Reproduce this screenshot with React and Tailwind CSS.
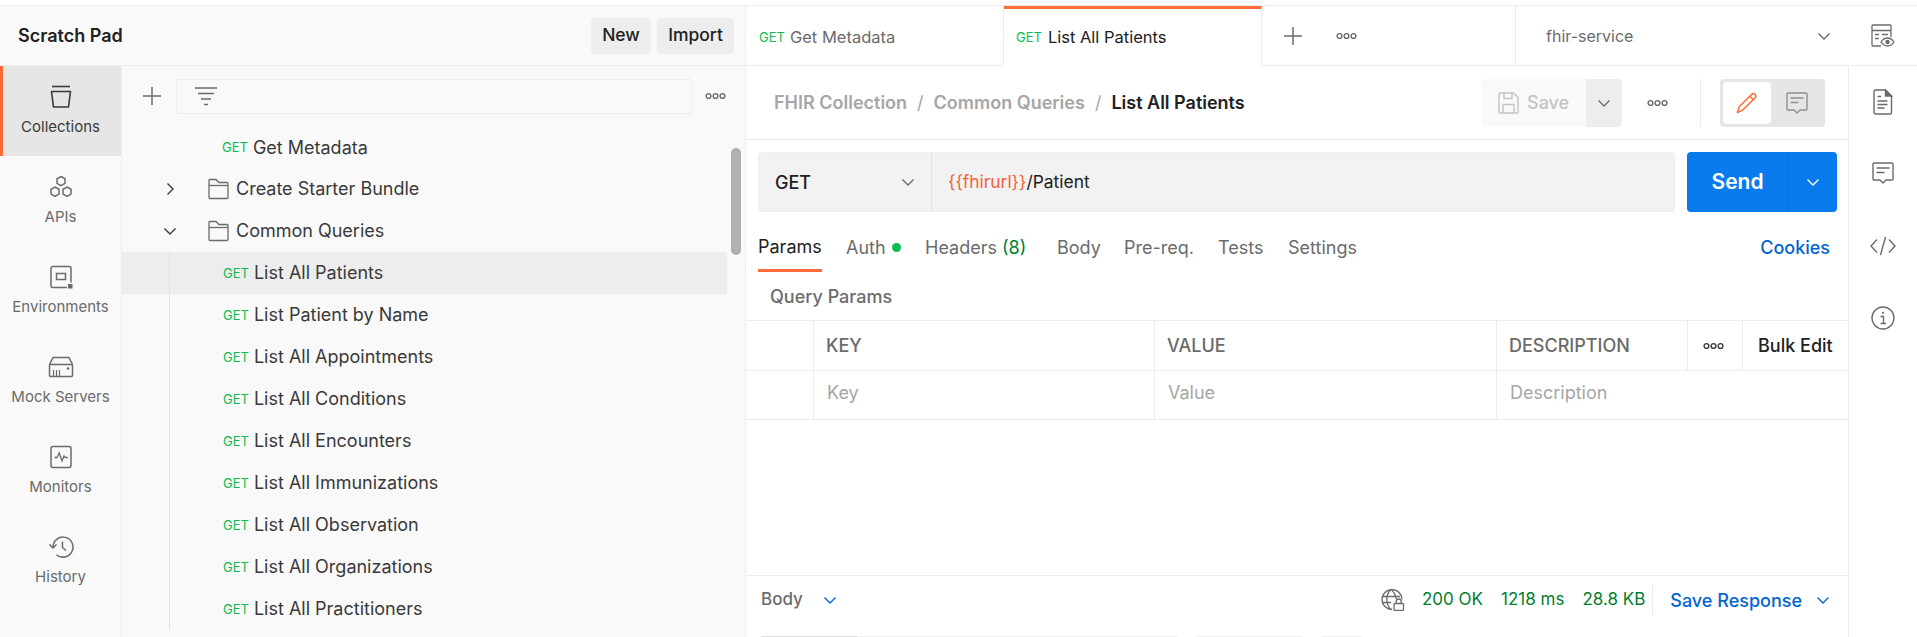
import React from 'react';

const Dots = ({ className = 'text-[#6b6b6b]' }) => (
  <svg width="21" height="8" viewBox="0 0 21 8" fill="none" stroke="currentColor" strokeWidth="1.4" className={className}>
    <circle cx="3.5" cy="4" r="2.4" />
    <circle cx="10.5" cy="4" r="2.4" />
    <circle cx="17.5" cy="4" r="2.4" />
  </svg>
);

const Chevron = ({ dir = 'down', size = 14, className = 'text-[#6b6b6b]' }) => (
  <svg width={size} height={size} viewBox="0 0 14 14" fill="none" stroke="currentColor" strokeWidth="1.4" className={className}>
    {dir === 'down' ? <path d="M1.5 4.5 7 10l5.5-5.5" /> : <path d="M4.5 1.5 10 7l-5.5 5.5" />}
  </svg>
);

const Plus = ({ size = 20, className = 'text-[#6b6b6b]' }) => (
  <svg width={size} height={size} viewBox="0 0 20 20" fill="none" stroke="currentColor" strokeWidth="1.5" className={className}>
    <path d="M10 1v18M1 10h18" />
  </svg>
);

const Folder = () => (
  <svg width="21" height="22" viewBox="0 0 21 22" fill="none" stroke="#6b6b6b" strokeWidth="1.3">
    <path d="M1 2.5A1 1 0 0 1 2 1.5h6l3 3h8a1 1 0 0 1 1 1v14a1 1 0 0 1-1 1H2a1 1 0 0 1-1-1z" />
    <path d="M1 7.5h19" />
  </svg>
);

const CollectionsIcon = () => (
  <svg width="24" height="24" viewBox="0 0 24 24" fill="none" stroke="#3a3a3a" strokeWidth="1.6">
    <path d="M3 1.5h18" />
    <path d="M2.5 6.5h19l-2 15.5h-15z" strokeLinejoin="round" />
  </svg>
);

const ApisIcon = () => (
  <svg width="24" height="24" viewBox="0 0 24 24" fill="none" stroke="#6b6b6b" strokeWidth="1.5">
    <path d="m12 1.5 4 2.3v4.6l-4 2.3-4-2.3V3.8z" />
    <path d="m6 12 4 2.3v4.8L6 21.5l-4-2.4v-4.8z" />
    <path d="m18 12 4 2.3v4.8l-4 2.4-4-2.4v-4.8z" />
  </svg>
);

const EnvIcon = () => (
  <svg width="24" height="24" viewBox="0 0 24 24" fill="none" stroke="#6b6b6b" strokeWidth="1.5">
    <path d="M18 22.5H4a2 2 0 0 1-2-2v-17a2 2 0 0 1 2-2h16a2 2 0 0 1 2 2v14" />
    <rect x="7.5" y="8.5" width="9" height="6" />
    <rect x="19" y="19" width="4.5" height="4.5" fill="#6b6b6b" stroke="none" />
  </svg>
);

const MockIcon = () => (
  <svg width="26" height="24" viewBox="0 0 26 24" fill="none" stroke="#6b6b6b" strokeWidth="1.5">
    <path d="M1.5 9.5 5 2.5h16l3.500 7" />
    <rect x="1.500" y="9.500" width="23" height="12" rx="1" />
    <path d="M5.500 15v6M8.500 15v6M11.500 15v6" strokeWidth="1.2" />
    <circle cx="20" cy="13.500" r="1.300" fill="#6b6b6b" stroke="none" />
  </svg>
);

const MonitorIcon = () => (
  <svg width="24" height="24" viewBox="0 0 24 24" fill="none" stroke="#6b6b6b" strokeWidth="1.5">
    <rect x="2" y="1.500" width="20" height="21" rx="2" />
    <path d="M5.500 12.500h2.500l2.200-4.500 2.800 8 2-5 1.300 1.500h2.500" strokeWidth="1.300" />
  </svg>
);

const HistoryIcon = () => (
  <svg width="26" height="24" viewBox="0 0 26 24" fill="none" stroke="#6b6b6b" strokeWidth="1.5">
    <path d="M5 12a10 10 0 1 1 3.500 7.700" />
    <path d="m1.500 9.500 3.500 3.500 3.500-3.500" />
    <path d="M14.500 6.500v6l3.500 3" />
  </svg>
);

const FilterIcon = () => (
  <svg width="22" height="20" viewBox="0 0 22 20" fill="none" stroke="#6b6b6b" strokeWidth="1.5">
    <path d="M0 2h22M3 7.500h16M6 13h10M9 18.500h4" />
  </svg>
);

const EyeDocIcon = () => (
  <svg width="24" height="24" viewBox="0 0 24 24" fill="none" stroke="#6b6b6b" strokeWidth="1.300">
    <path d="M10 22H2a1 1 0 0 1-1-1V2a1 1 0 0 1 1-1h17a1 1 0 0 1 1 1v11" />
    <path d="M1 6.500h19M4 10.500h4M11 10.500h6M4 14.500h4" />
    <path d="M10 18c2-3 4-4 6.500-4s4.500 1 6.500 4c-2 3-4 4-6.500 4s-4.500-1-6.500-4z" fill="#fff" />
    <circle cx="16.500" cy="18" r="2.200" fill="#6b6b6b" stroke="none" />
  </svg>
);

const DocIcon = () => (
  <svg width="20" height="26" viewBox="0 0 20 26" fill="none" stroke="#6b6b6b" strokeWidth="1.400">
    <path d="M2.500 1h10L18.500 7v16.500a1.500 1.500 0 0 1-1.500 1.500H2.500A1.500 1.500 0 0 1 1 23.500v-21A1.500 1.500 0 0 1 2.500 1z" />
    <path d="M12.500 1v6h6z" fill="#6b6b6b" />
    <path d="M4.500 7.500h3.500M4.500 12h10M4.500 15.500h10M4.500 19h7" />
  </svg>
);

const CommentIcon = ({ stroke = '#6b6b6b' }) => (
  <svg width="22" height="22" viewBox="0 0 22 22" fill="none" stroke={stroke} strokeWidth="1.400">
    <path d="M2 1h18a1 1 0 0 1 1 1v15a1 1 0 0 1-1 1h-6l-3 3-3-3H2a1 1 0 0 1-1-1V2a1 1 0 0 1 1-1z" />
    <path d="M4.500 6h13M4.500 10.500h8" />
  </svg>
);

const CodeIcon = () => (
  <svg width="26" height="20" viewBox="0 0 26 20" fill="none" stroke="#6b6b6b" strokeWidth="1.400">
    <path d="M7 3.500 1 10l6 6.500M19 3.500l6 6.500-6 6.500M15.500 1l-5 18" />
  </svg>
);

const InfoIcon = () => (
  <svg width="24" height="24" viewBox="0 0 24 24" fill="none" stroke="#6b6b6b" strokeWidth="1.400">
    <circle cx="12" cy="12" r="11" />
    <circle cx="12" cy="6.800" r="1.100" fill="#6b6b6b" stroke="none" />
    <path d="M9.500 10.500H12.500V17.500M9.500 17.500H15" />
  </svg>
);

const SaveIcon = () => (
  <svg width="21" height="22" viewBox="0 0 21 22" fill="none" stroke="#c4c4c4" strokeWidth="1.400">
    <path d="M2 1h13.500L20 5.500V20a1 1 0 0 1-1 1H2a1 1 0 0 1-1-1V2a1 1 0 0 1 1-1z" />
    <path d="M6 1v5.500h8V1M5 21v-8.500h11V21" />
  </svg>
);

const PencilIcon = () => (
  <svg width="22" height="22" viewBox="0 0 22 22" fill="none" stroke="#ff6c37" strokeWidth="1.500">
    <path d="M1.500 20.500 3 15 15.500 2.500a2.300 2.300 0 0 1 3.700 3.300L7 17.800z" strokeLinejoin="round" />
    <path d="m14 4.500 3.700 3.500" />
  </svg>
);

const GlobeIcon = () => (
  <svg width="25" height="22" viewBox="0 0 25 22" fill="none" stroke="#6b6b6b" strokeWidth="1.300">
    <path d="M12 20.500a10 10 0 1 1 10-10" />
    <path d="M10.500 1C5.500 6 5.500 15 10.500 20M11.500 1c3 2.500 4.300 5.500 4.700 9M2 7.500h18M2 13.500h9" />
    <rect x="14" y="14.500" width="9.500" height="7" rx="1" fill="#fff" />
    <path d="M16.200 14.500v-2a2.500 2.500 0 0 1 5 0v2" />
  </svg>
);

const RailItem = ({ icon, label, active }) => (
  <div className={`h-[90px] flex flex-col items-center pt-[18px] pr-[3px] border-l-[3px] ${active ? 'bg-[#e6e6e6] border-[#ff6c37] text-[#3a3a3a]' : 'border-transparent text-[#6b6b6b]'}`}>
    <div className="h-[25px] flex items-center">{icon}</div>
    <span className="mt-[8px] text-[15px] leading-[20px] whitespace-nowrap">{label}</span>
  </div>
);

const Get = ({ className = '' }) => (
  <span className={`text-[13px] leading-none text-[#0cbb52] ${className}`}>GET</span>
);

const FolderRow = ({ name, open }) => (
  <div className="h-[42px] flex items-center text-[18px] text-[#3a3a3a]">
    <div className="w-[96px] flex items-center">
      <span className="ml-[41px] w-[14px]"><Chevron dir={open ? 'down' : 'right'} className="text-[#3a3a3a]" /></span>
      <span className="ml-[31px]"><Folder /></span>
    </div>
    <span className="-ml-[4px] pl-[22px] pb-px">{name}</span>
  </div>
);

const requests = [
  'List All Patients',
  'List Patient by Name',
  'List All Appointments',
  'List All Conditions',
  'List All Encounters',
  'List All Immunizations',
  'List All Observation',
  'List All Organizations',
  'List All Practitioners',
];

const HeadCell = ({ width, children }) => (
  <div className={`${width} h-full flex items-center pl-[12px] pb-px border-r border-[#ededed] text-[18px] font-medium text-[#6b6b6b]`}>{children}</div>
);

const KeyCell = ({ width, children }) => (
  <div className={`${width} h-full flex items-center pl-[13px] pb-[5px] border-r border-[#ededed] text-[18px] text-[#a6a6a6]`}>{children}</div>
);

export default function App() {
  return (
    <div className="w-[1917px] h-[637px] overflow-hidden bg-white flex flex-col font-[Inter,sans-serif]">
      <div className="h-[6px] shrink-0 border-b border-[#ededed]" />
      <div className="flex flex-1 min-h-0">
        {/* left panel */}
        <div className="w-[746px] shrink-0 bg-[#f9f9f9] border-r border-[#ededed] flex flex-col">
          <div className="h-[60px] shrink-0 border-b border-[#ededed] flex items-center pl-[18px] pr-[11px]">
            <span className="text-[18px] font-semibold text-[#212121]">Scratch Pad</span>
            <div className="ml-auto flex gap-[6px]">
              <button className="w-[60px] h-[36px] rounded-[4px] bg-[#ededed] text-[17.500px] font-medium text-[#212121]">New</button>
              <button className="w-[77px] h-[36px] rounded-[4px] bg-[#ededed] text-[17.500px] font-medium text-[#212121]">Import</button>
            </div>
          </div>
          <div className="flex flex-1 min-h-0">
            <div className="w-[122px] shrink-0 border-r border-[#ededed]">
              <RailItem icon={<CollectionsIcon />} label="Collections" active />
              <RailItem icon={<ApisIcon />} label="APIs" />
              <RailItem icon={<EnvIcon />} label="Environments" />
              <RailItem icon={<MockIcon />} label="Mock Servers" />
              <RailItem icon={<MonitorIcon />} label="Monitors" />
              <RailItem icon={<HistoryIcon />} label="History" />
            </div>
            <div className="relative flex-1 min-w-0">
              <div className="h-[60px] flex items-center">
                <span className="ml-[20px]"><Plus /></span>
                <div className="ml-[14px] w-[516px] h-[35px] border border-[#ededed] rounded-[2px] flex items-center pl-[18px]">
                  <FilterIcon />
                </div>
                <span className="ml-[13px]"><Dots /></span>
              </div>
              <div className="mr-[18px]">
                <div className="h-[42px] flex items-center pl-[100px] text-[18px] text-[#3a3a3a]">
                  <Get />
                  <span className="ml-[5px]">Get Metadata</span>
                </div>
                <FolderRow name="Create Starter Bundle" />
                <FolderRow name="Common Queries" open />
                {requests.map((name, i) => (
                  <div key={name} className={`h-[42px] pl-[47px] ${i === 0 ? 'bg-[#ededed]' : ''}`}>
                    <div className="h-full border-l border-[#e3e3e3] flex items-center pl-[53px] text-[18px] text-[#3a3a3a]">
                      <Get />
                      <span className="ml-[5px] pb-px">{name}</span>
                    </div>
                  </div>
                ))}
              </div>
              <div className="absolute left-[609px] top-[82px] w-[10px] h-[107px] rounded-full bg-[#b0b0b0]" />
            </div>
          </div>
        </div>

        {/* right side */}
        <div className="flex-1 min-w-0 flex flex-col">
          <div className="h-[60px] shrink-0 border-b border-[#ededed] flex items-stretch">
            <div className="w-[258px] flex items-center pl-[13px] pt-[3px] border-r border-[#ededed] text-[16.500px] text-[#6b6b6b]">
              <Get />
              <span className="ml-[5px]">Get Metadata</span>
            </div>
            <div className="w-[258px] flex items-center pl-[12px] border-r border-[#ededed] border-t-[3px] border-t-[#ff6c37] -mb-px bg-white text-[16.500px] text-[#212121]">
              <Get />
              <span className="ml-[6px]">List All Patients</span>
            </div>
            <div className="w-[254px] flex items-center border-r border-[#ededed]">
              <span className="ml-[21px]"><Plus /></span>
              <span className="ml-[33px]"><Dots /></span>
            </div>
            <div className="w-[333px] flex items-center pl-[30px] border-r-0 text-[16px] text-[#6b6b6b]">
              <span>fhir-service</span>
              <span className="ml-auto mr-[18px]"><Chevron /></span>
            </div>
            <div className="flex-1 flex items-center justify-center"><EyeDocIcon /></div>
          </div>

          <div className="flex flex-1 min-h-0">
            <div className="w-[1103px] shrink-0 border-r border-[#ededed] flex flex-col">
              {/* breadcrumb */}
              <div className="h-[74px] shrink-0 border-b border-[#ededed] flex items-center pl-[28px] text-[18px] font-semibold">
                <span className="text-[#a6a6a6]">FHIR Collection</span>
                <span className="mx-[10px] font-normal text-[#a6a6a6]">/</span>
                <span className="text-[#a6a6a6]">Common Queries</span>
                <span className="mx-[10px] font-normal text-[#a6a6a6]">/</span>
                <span className="text-[#212121]">List All Patients</span>
                <div className="ml-auto h-[48px] flex items-center">
                  <div className="w-[104px] h-full rounded-l-[4px] bg-[#f9f9f9] flex items-center pl-[16px] text-[#c4c4c4] font-medium">
                    <SaveIcon />
                    <span className="ml-[8px]">Save</span>
                  </div>
                  <div className="w-[36px] h-full rounded-r-[4px] bg-[#ededed] flex items-center justify-center"><Chevron /></div>
                  <span className="ml-[25px]"><Dots /></span>
                  <div className="ml-[32px] w-px h-full bg-[#ededed]" />
                  <div className="ml-[19px] mr-[23px] w-[105px] h-full rounded-[4px] bg-[#e6e6e6] p-[3px] flex items-stretch">
                    <div className="w-[48px] rounded-[4px] bg-white flex items-center justify-center"><PencilIcon /></div>
                    <div className="flex-1 flex items-center justify-center"><CommentIcon stroke="#8f8f8f" /></div>
                  </div>
                </div>
              </div>

              {/* url bar */}
              <div className="pt-[12px] pl-[12px] shrink-0 flex">
                <div className="w-[917px] h-[60px] rounded-[4px] border border-[#ededed] bg-[#f2f2f2] flex text-[18px]">
                  <div className="w-[173px] border-r border-[#e3e3e3] flex items-center pl-[16px] pr-[16px] font-medium text-[#212121]">
                    GET
                    <span className="ml-auto"><Chevron /></span>
                  </div>
                  <div className="flex items-center pl-[16px] text-[17.400px] text-[#212121]">
                    <span className="text-[#f4623a]">{'{{fhirurl}}'}</span>/Patient
                  </div>
                </div>
                <div className="ml-[12px] w-[150px] h-[60px] rounded-[4px] bg-[#097bed] flex text-white">
                  <div className="w-[102px] border-r border-[#0a6fd6] flex items-center justify-center text-[21px] font-semibold">Send</div>
                  <div className="flex-1 flex items-center justify-center"><Chevron className="text-white" /></div>
                </div>
              </div>

              {/* request tabs */}
              <div className="h-[60px] shrink-0 pl-[12px] pr-[18px] flex items-stretch text-[18px] text-[#6b6b6b]">
                <div className="w-[88px]">
                  <span className="inline-flex items-center h-full pt-[12px] border-b-[3px] border-[#ff6c37] text-[#212121]">Params</span>
                </div>
                <div className="w-[79px] pt-[11px] flex items-center gap-[6px]">
                  Auth
                  <span className="w-[9px] h-[9px] rounded-full bg-[#0cbb52]" />
                </div>
                <div className="w-[132px] pt-[11px] flex items-center">
                  Headers&nbsp;<span className="text-[#007f31]">(8)</span>
                </div>
                <div className="w-[67px] pt-[11px] flex items-center">Body</div>
                <div className="w-[94px] pt-[11px] flex items-center">Pre-req.</div>
                <div className="w-[70px] pt-[11px] flex items-center">Tests</div>
                <div className="pt-[11px] flex items-center">Settings</div>
                <div className="ml-auto pt-[11px] flex items-center font-medium text-[#0265d2]">Cookies</div>
              </div>

              <div className="h-[48px] shrink-0 pl-[24px] flex items-center text-[18px] font-medium text-[#6b6b6b]">Query Params</div>

              {/* params table */}
              <div className="h-[51px] shrink-0 border-y border-[#ededed] flex">
                <HeadCell width="w-[68px]" />
                <HeadCell width="w-[341px]">KEY</HeadCell>
                <HeadCell width="w-[342px]">VALUE</HeadCell>
                <HeadCell width="w-[191px]">DESCRIPTION</HeadCell>
                <div className="w-[55px] h-full flex items-center justify-center pr-[4px] border-r border-[#ededed]"><Dots className="text-[#3a3a3a]" /></div>
                <div className="flex-1 flex items-center pl-[15px] text-[18px] font-medium text-[#212121] whitespace-nowrap">Bulk Edit</div>
              </div>
              <div className="h-[49px] shrink-0 border-b border-[#ededed] flex">
                <KeyCell width="w-[68px]" />
                <KeyCell width="w-[341px]">Key</KeyCell>
                <KeyCell width="w-[342px]">Value</KeyCell>
                <div className="flex-1 flex items-center pl-[13px] pb-[5px] text-[18px] text-[#a6a6a6]">Description</div>
              </div>
              <div className="flex-1" />

              {/* response bar */}
              <div className="h-[61px] shrink-0 border-t border-[#ededed] flex items-center pl-[15px] pr-[18px] pb-[12px] text-[17px]">
                <span className="font-medium text-[#6b6b6b]">Body</span>
                <span className="ml-[20px]"><Chevron className="text-[#0265d2]" /></span>
                <span className="ml-auto"><GlobeIcon /></span>
                <span className="ml-[17px] text-[#007f31]">200 OK</span>
                <span className="ml-[18px] text-[#007f31]">1218 ms</span>
                <span className="ml-[18px] text-[#007f31]">28.8 KB</span>
                <div className="ml-[7px] w-px h-[32px] bg-[#ededed]" />
                <span className="ml-[17px] text-[18px] font-medium text-[#0265d2]">Save Response</span>
                <span className="ml-[14px]"><Chevron className="text-[#0265d2]" /></span>
              </div>
              <div className="h-px shrink-0 flex pl-[15px]">
                <div className="w-[96px] bg-[#e0e0e0]" />
                <div className="w-[320px] bg-[#f2f2f2]" />
                <div className="ml-[19px] w-[106px] bg-[#f2f2f2]" />
                <div className="ml-[20px] w-[40px] bg-[#f2f2f2]" />
              </div>
            </div>

            {/* right rail */}
            <div className="flex-1 flex flex-col items-center pt-[23px]">
              <div className="h-[26px] flex items-center"><DocIcon /></div>
              <div className="mt-[45px] h-[26px] flex items-center"><CommentIcon /></div>
              <div className="mt-[47px] h-[26px] flex items-center"><CodeIcon /></div>
              <div className="mt-[46px] h-[26px] flex items-center"><InfoIcon /></div>
            </div>
          </div>
        </div>
      </div>
    </div>
  );
}
